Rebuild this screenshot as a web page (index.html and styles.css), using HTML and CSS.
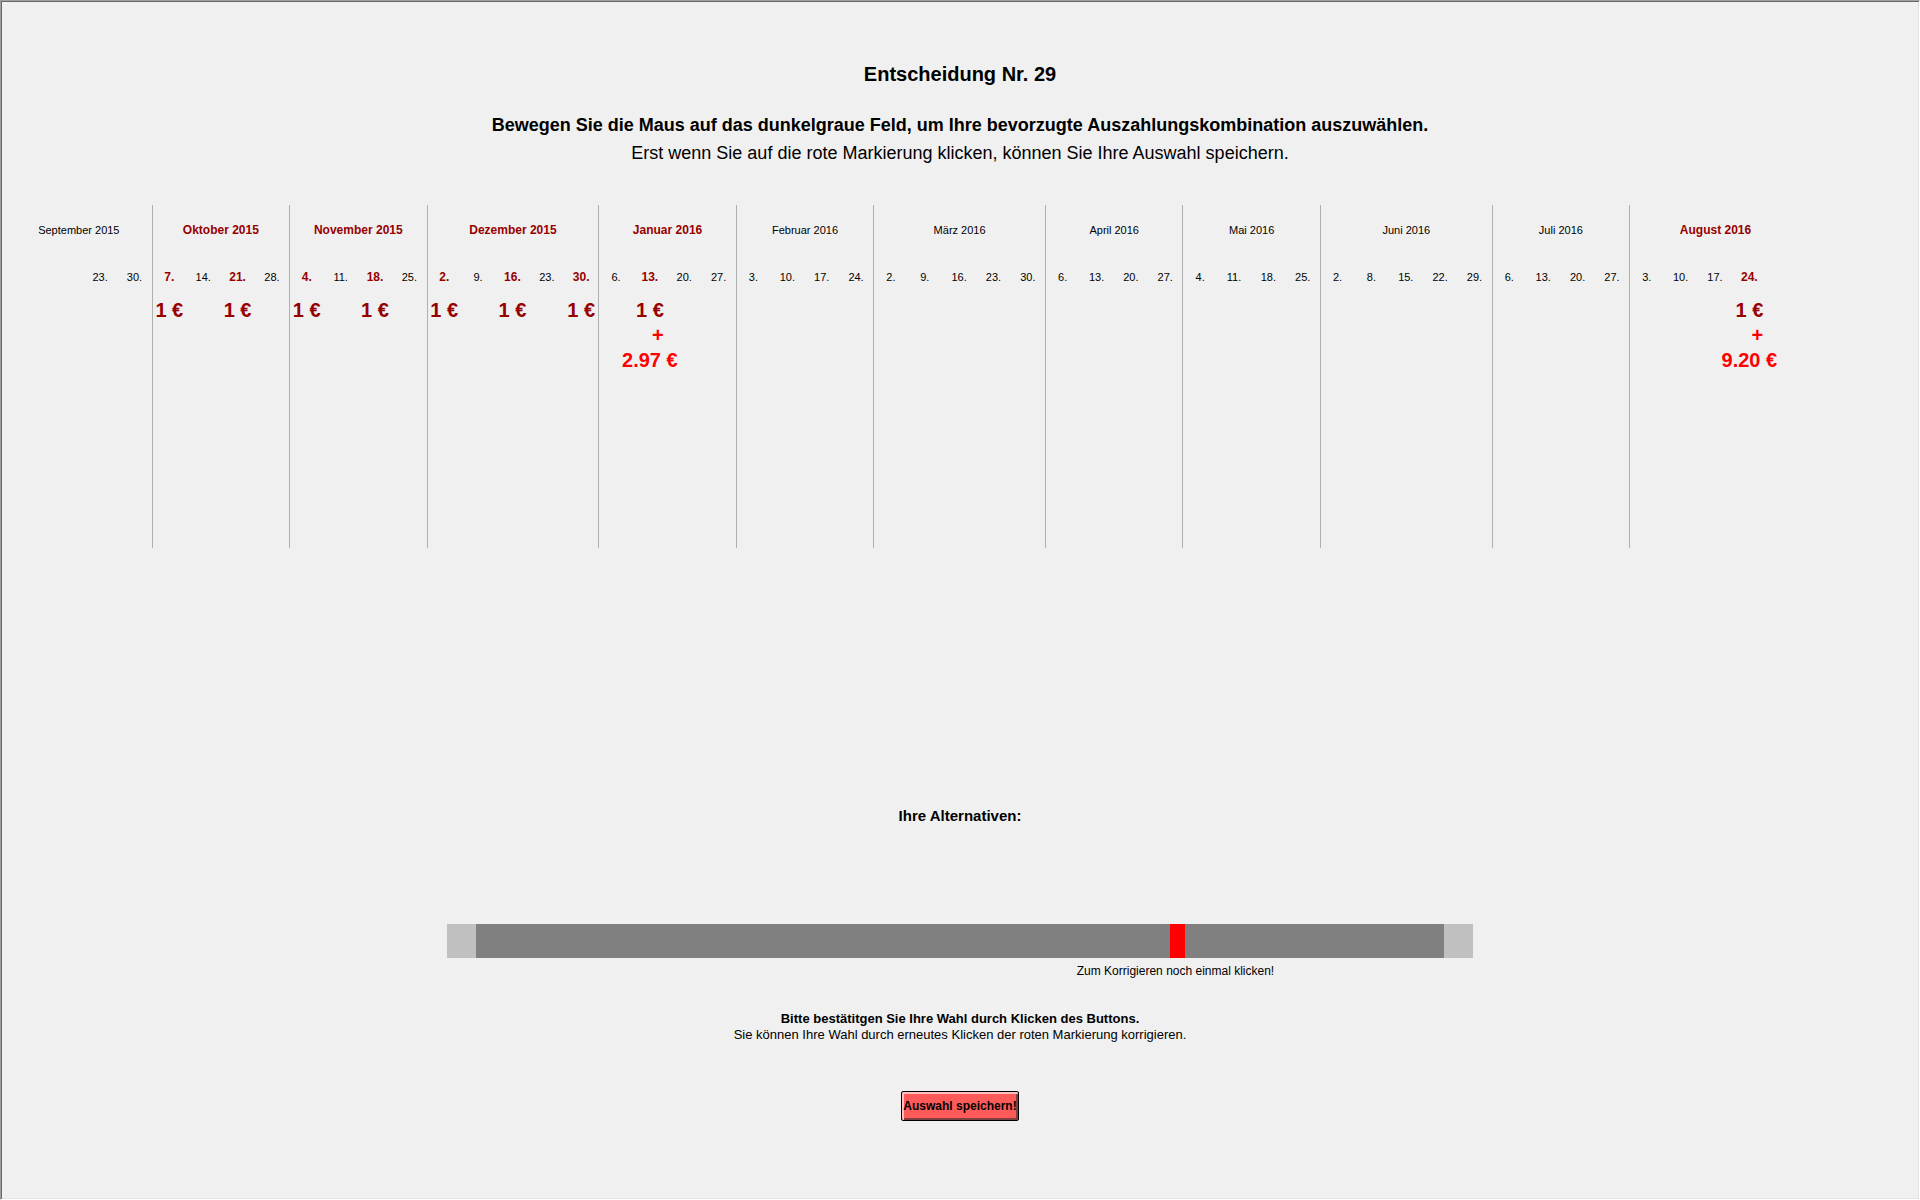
FILE: index.html
```html
<!DOCTYPE html>
<html lang="de">
<head>
<meta charset="utf-8">
<title>Entscheidung Nr. 29</title>
<link rel="stylesheet" href="styles.css">
</head>
<body>
<main class="screen">
  <header class="intro">
    <h1>Entscheidung Nr. 29</h1>
    <p class="lead">Bewegen Sie die Maus auf das dunkelgraue Feld, um Ihre bevorzugte Auszahlungskombination auszuwählen.</p>
    <p>Erst wenn Sie auf die rote Markierung klicken, können Sie Ihre Auswahl speichern.</p>
  </header>

  <table class="calendar">
    <colgroup><col class="rest"><col span="50" class="week"></colgroup>
    <thead>
      <tr class="months">
        <th colspan="3">September 2015</th>
        <th colspan="4" class="first paid">Oktober 2015</th>
        <th colspan="4" class="first paid">November 2015</th>
        <th colspan="5" class="first paid">Dezember 2015</th>
        <th colspan="4" class="first paid">Januar 2016</th>
        <th colspan="4" class="first">Februar 2016</th>
        <th colspan="5" class="first">März 2016</th>
        <th colspan="4" class="first">April 2016</th>
        <th colspan="4" class="first">Mai 2016</th>
        <th colspan="5" class="first">Juni 2016</th>
        <th colspan="4" class="first">Juli 2016</th>
        <th colspan="5" class="first paid">August 2016</th>
      </tr>
      <tr class="days">
        <td></td><th>23.</th><th>30.</th>
        <th class="first paid">7.</th><th>14.</th><th class="paid">21.</th><th>28.</th>
        <th class="first paid">4.</th><th>11.</th><th class="paid">18.</th><th>25.</th>
        <th class="first paid">2.</th><th>9.</th><th class="paid">16.</th><th>23.</th><th class="paid">30.</th>
        <th class="first">6.</th><th class="paid">13.</th><th>20.</th><th>27.</th>
        <th class="first">3.</th><th>10.</th><th>17.</th><th>24.</th>
        <th class="first">2.</th><th>9.</th><th>16.</th><th>23.</th><th>30.</th>
        <th class="first">6.</th><th>13.</th><th>20.</th><th>27.</th>
        <th class="first">4.</th><th>11.</th><th>18.</th><th>25.</th>
        <th class="first">2.</th><th>8.</th><th>15.</th><th>22.</th><th>29.</th>
        <th class="first">6.</th><th>13.</th><th>20.</th><th>27.</th>
        <th class="first">3.</th><th>10.</th><th>17.</th><th class="paid">24.</th><td></td>
      </tr>
    </thead>
    <tbody>
      <tr class="amounts">
        <td></td><td></td><td></td>
        <td class="first"><div class="sum">1 €</div></td><td></td><td><div class="sum">1 €</div></td><td></td>
        <td class="first"><div class="sum">1 €</div></td><td></td><td><div class="sum">1 €</div></td><td></td>
        <td class="first"><div class="sum">1 €</div></td><td></td><td><div class="sum">1 €</div></td><td></td><td><div class="sum">1 €</div></td>
        <td class="first"></td><td><div class="sum">1 €</div><div class="sum extra plus">+</div><div class="sum extra">2.97 €</div></td><td></td><td></td>
        <td class="first"></td><td></td><td></td><td></td>
        <td class="first"></td><td></td><td></td><td></td><td></td>
        <td class="first"></td><td></td><td></td><td></td>
        <td class="first"></td><td></td><td></td><td></td>
        <td class="first"></td><td></td><td></td><td></td><td></td>
        <td class="first"></td><td></td><td></td><td></td>
        <td class="first"></td><td></td><td></td><td><div class="sum">1 €</div><div class="sum extra plus">+</div><div class="sum extra">9.20 €</div></td><td></td>
      </tr>
    </tbody>
  </table>

  <form class="choice">
    <label class="choice-title" for="alternative">Ihre Alternativen:</label>
    <div class="slider">
      <div class="bar"><input id="alternative" type="range" min="0" max="1000" value="728"></div>
      <p class="hint">Zum Korrigieren noch einmal klicken!</p>
    </div>
    <p class="confirm"><strong>Bitte bestätitgen Sie Ihre Wahl durch Klicken des Buttons.</strong></p>
    <p class="confirm">Sie können Ihre Wahl durch erneutes Klicken der roten Markierung korrigieren.</p>
    <button class="save" type="button">Auswahl speichern!</button>
  </form>
</main>
</body>
</html>
```
FILE: styles.css
```css
* { box-sizing: border-box; }

body {
  margin: 0;
  background: #f0f0f0;
  color: #000;
  font-family: "Liberation Sans", Arial, sans-serif;
  font-size: 12px;
}

h1, p { margin: 0; }

/* sunken window edge */
.screen {
  min-height: 100vh;
  padding-top: 61px;
  border: 1px solid;
  border-color: #a0a0a0 #fff #fff #a0a0a0;
  box-shadow: inset 1px 1px #696969, inset -1px -1px #e3e3e3;
}

.intro {
  text-align: center;
  font-size: 18px;
  line-height: 28px;
}
.intro h1 {
  margin-bottom: 25px;
  font-size: 20px;
  line-height: 24px;
}
.lead { font-weight: bold; }

.calendar {
  width: calc(94% - 8px);
  margin: 38px 0 0 5px;
  table-layout: fixed;
  border-collapse: separate;
  border-spacing: 0;
}
.week { width: 1.915%; }
.calendar th,
.calendar td {
  padding: 0;
  text-align: center;
  white-space: nowrap;
}
.calendar th {
  font-size: 11px;
  font-weight: normal;
}
.calendar .first { border-left: 1px solid #b0b0b0; }
.calendar .paid {
  color: #960000;
  font-size: 12px;
  font-weight: bold;
}
.months { height: 50px; }
.days { height: 43px; }
.amounts { height: 250px; }
.amounts td { vertical-align: top; }

.sum {
  margin: 0 -20px;
  color: #960000;
  font-size: 20px;
  font-weight: bold;
  line-height: 25px;
}
.extra { color: #f00; }
.plus { padding-left: 16px; }

.choice {
  display: flex;
  flex-direction: column;
  align-items: center;
  margin-top: 258px;
  padding-bottom: 40px;
}
.choice-title {
  font-size: 15px;
  font-weight: bold;
  line-height: 20px;
}
.slider {
  width: 53.5%;
  margin: 98px 0 32px;
}
.bar {
  display: flex;
  padding: 0 29px;
  background: #c0c0c0;
}
.bar input {
  appearance: none;
  flex: 1;
  height: 34px;
  margin: 0;
  background: #808080;
}
.bar input::-webkit-slider-thumb {
  appearance: none;
  width: 15px;
  height: 34px;
  background: #f00;
}
.bar input::-moz-range-thumb {
  width: 15px;
  height: 34px;
  border: 0;
  border-radius: 0;
  background: #f00;
}
.hint {
  margin-top: 5px;
  padding-left: 42%;
  text-align: center;
  line-height: 16px;
}
.confirm {
  font-size: 13px;
  line-height: 16px;
}
.save {
  height: 30px;
  margin-top: 48px;
  padding: 0 1px;
  border: 1px solid #000;
  border-radius: 2px;
  background: #ff5a5a;
  box-shadow: inset 2px 2px #ffc0c0, inset -2px -2px #804040;
  color: #000;
  font: bold 12px "Liberation Sans", Arial, sans-serif;
}
```
